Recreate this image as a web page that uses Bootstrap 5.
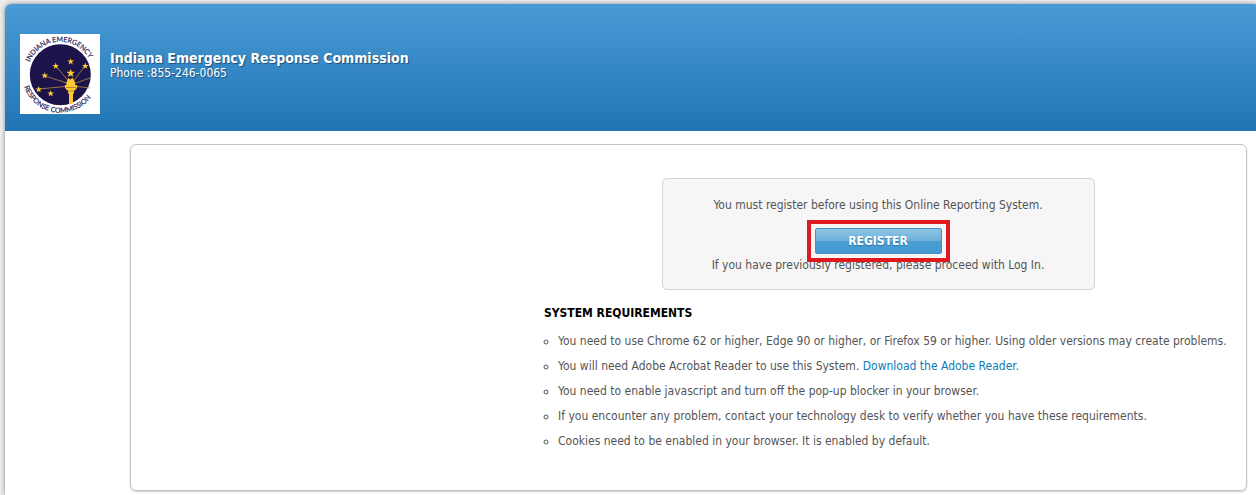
<!DOCTYPE html>
<html lang="en">
<head>
<meta charset="utf-8">
<meta name="viewport" content="width=device-width, initial-scale=1">
<title>Indiana Emergency Response Commission</title>
<link href="https://cdn.jsdelivr.net/npm/bootstrap@5.3.0/dist/css/bootstrap.min.css" rel="stylesheet">
<style>
  body { background: #ebebeb; color: #555; font-family: "DejaVu Sans Condensed", Tahoma, sans-serif; font-size: 12px; line-height: 20px; overflow-x: hidden; }
  .sheet { min-height: calc(100vh - 4px); margin: 4px 0 0 5px; padding-bottom: 4px; background: #fff; border-top-left-radius: 6px; box-shadow: 0 0 4px #888; overflow: hidden; }
  .masthead { padding: 30px 15px 17px; gap: 10px; background: linear-gradient(#4a9bd6, #2175b5); color: #fff; text-shadow: 1px 1px 1px #1d4f7a; }
  .masthead h1 { font-size: 14px; line-height: 16px; margin: 16px 0 0; }
  .masthead p { line-height: 14px; }
  .seal-text { text-shadow: none; font-family: Lato, sans-serif; font-size: 7px; }
  .panel { margin: 13px 9px 0 125px; padding: 33px 20px 36px 0; border: 1px solid #c4c4c4; border-radius: 6px; box-shadow: 0 1px 2px #ccc; }
  .content { flex: 0 1 696px; }
  .notice { width: 433px; max-width: 100%; padding: 16px 12px 14px; background: #f6f6f6; border: 1px solid #d3d3d3; border-radius: 5px; }
  .register { width: 127px; margin: 13px auto 1px; }
  .btn-register { width: 100%; height: 26px; padding: 0; border: 1px solid #4391c5; border-radius: 2px; background: linear-gradient(#8dc5e4, #6db0da 50%, #489dd1 50%, #459bd0); color: #fff; font-size: 12px; font-weight: 700; line-height: 24px; text-shadow: 0 1px 1px #2c74a5; }
  .btn-register:hover { color: #fff; border-color: #2f7cb0; }
  .highlight { position: absolute; inset: -8px; border: 4px solid #e0191f; pointer-events: none; }
  h2 { font-size: 12px; font-weight: 700; line-height: 20px; color: #000; margin: 13px 0 6px 14px; }
  .requirements { list-style: circle; padding-left: 28px; margin-right: -16px; line-height: 25px; }
  .requirements a { color: #0a7cb8; text-decoration: none; }
</style>
</head>
<body>
<div class="sheet">
  <header class="masthead d-flex align-items-start">
    <svg class="flex-shrink-0" width="80" height="80" viewBox="0 0 80 80" role="img" aria-label="Commission seal">
      <defs>
        <path id="arcTop" d="M7.300 40.700a33 33 0 0 1 66 0"/>
        <path id="arcBottom" d="M2.300 40.700a38 38 0 0 0 76 0"/>
        <path id="star" d="M0-1 .23-.32.95-.31.38.12.59.81 0 .4-.59.81-.38.12-.95-.31-.23-.32Z"/>
      </defs>
      <rect width="80" height="80" fill="#fff"/>
      <circle cx="40.300" cy="40.700" r="30.500" fill="#1b1349"/>
      <path d="M50 50 25 42M50 49 36 32M52 49 65 32M50 52 19 55M53 50 70 44M53 52 70 54" fill="none" stroke="#b98c45" stroke-width=".8"/>
      <g fill="#fcc934">
        <use href="#star" transform="translate(50.700 27.700) scale(3.500)"/>
        <use href="#star" transform="translate(35.700 32) scale(3.500)"/>
        <use href="#star" transform="translate(65.300 32) scale(3.500)"/>
        <use href="#star" transform="translate(24.700 41.700) scale(3.500)"/>
        <use href="#star" transform="translate(50.700 39.300) scale(4.600)"/>
        <use href="#star" transform="translate(18.700 55.500) scale(3.500)"/>
        <use href="#star" transform="translate(30.700 59.500) scale(3.500)"/>
        <path d="M47 52c-2-4 1-5 1-8 2 1 2 2 3 1 1-1 1-1 2-1 0 2 3 3 2 8ZM45 51h12v3l-3 3v2l-1 1v9.500l-4 .900V60l-1-1v-2l-3-3Z"/>
      </g>
      <path d="M46 53.500h10M48 57h6" stroke="#9a6b1c" stroke-width=".7"/>
      <g class="seal-text" fill="#2b2860" stroke="#2b2860" stroke-width=".2" text-anchor="middle" text-rendering="geometricPrecision">
        <text><textPath href="#arcTop" startOffset="48%">INDIANA EMERGENCY</textPath></text>
        <text><textPath href="#arcBottom" startOffset="45%">RESPONSE COMMISSION</textPath></text>
      </g>
    </svg>
    <div>
      <h1 class="fw-bold">Indiana Emergency Response Commission</h1>
      <p class="mb-0">Phone :855-246-0065</p>
    </div>
  </header>
  <main class="panel d-flex justify-content-end">
    <div class="content">
      <section class="notice mx-auto text-center">
        <p class="mb-0">You must register before using this Online Reporting System.</p>
        <div class="register position-relative">
          <button type="button" class="btn btn-register d-block">REGISTER</button>
          <span class="highlight"></span>
        </div>
        <p class="mb-0">If you have previously registered, please proceed with Log In.</p>
      </section>
      <h2>SYSTEM REQUIREMENTS</h2>
      <ul class="requirements mb-0">
        <li>You need to use Chrome 62 or higher, Edge 90 or higher, or Firefox 59 or higher. Using older versions may create problems.</li>
        <li>You will need Adobe Acrobat Reader to use this System. <a href="#">Download the Adobe Reader.</a></li>
        <li>You need to enable javascript and turn off the pop-up blocker in your browser.</li>
        <li>If you encounter any problem, contact your technology desk to verify whether you have these requirements.</li>
        <li>Cookies need to be enabled in your browser. It is enabled by default.</li>
      </ul>
    </div>
  </main>
</div>
<script src="https://cdn.jsdelivr.net/npm/bootstrap@5.3.0/dist/js/bootstrap.bundle.min.js"></script>
</body>
</html>
